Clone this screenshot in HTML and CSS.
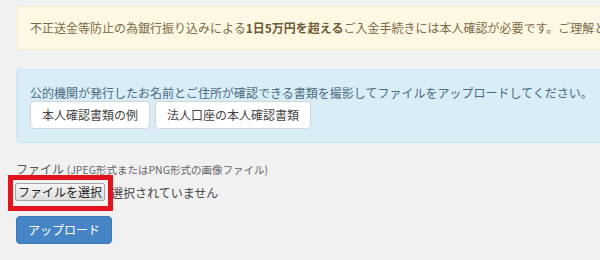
FILE: index.html
```
<!DOCTYPE html>
<html lang="ja">
<head>
<meta charset="utf-8">
<link rel="stylesheet" href="styles.css">
</head>
<body>
<div class="wrap">
  <div class="alert alert-warning">不正送金等防止の為銀行振り込みによる<b>1日5万円を超える</b>ご入金手続きには本人確認が必要です。ご理解とご協力をお願いいたします。</div>
  <div class="alert alert-info">
    <p class="info-text">公的機関が発行したお名前とご住所が確認できる書類を撮影してファイルをアップロードしてください。</p>
    <div class="btn-row">
      <button class="btn btn-default">本人確認書類の例</button>
      <button class="btn btn-default">法人口座の本人確認書類</button>
    </div>
  </div>
  <div class="form">
    <div class="label">ファイル <span class="hint">(JPEG形式またはPNG形式の画像ファイル)</span></div>
    <div class="file-row">
      <div class="file-btn-wrap">
        <span class="file-btn">ファイルを選択</span>
        <span class="highlight"></span>
      </div>
      <span class="file-status">選択されていません</span>
    </div>
    <button class="btn btn-primary">アップロード</button>
  </div>
</div>
</body>
</html>
```
FILE: styles.css
```
html, body {
  margin: 0;
  padding: 0;
  background: #f1f1f1;
  overflow: hidden;
}
body {
  font-family: "Noto Sans CJK JP", "Noto Sans", sans-serif;
  font-size: 12px;
  color: #555;
}
.wrap {
  width: 760px;
  padding: 6px 0 0 16px;
}
.alert {
  border: 1px solid transparent;
  border-radius: 4px;
  white-space: nowrap;
}
.alert-warning {
  background: #fcf8e3;
  border-color: #f7ecd0;
  color: #7d6a47;
  padding: 12px 13px;
  line-height: 18px;
  margin-bottom: 19px;
}
.alert-warning b {
  font-weight: 700;
  color: #6f5a36;
}
.alert-info {
  background: #d9edf7;
  border-color: #c6e6f2;
  color: #4a6a80;
  padding: 14px 13px 13px;
}
.info-text {
  margin: 0;
  line-height: 17px;
}
.btn-row {
  display: flex;
  gap: 5px;
}
.btn {
  font-family: inherit;
  font-size: 12px;
  border-radius: 4px;
  border: 1px solid #ccc;
  height: 28px;
  padding: 0 11px;
  line-height: 26px;
  cursor: pointer;
}
.btn-default {
  background: #fff;
  color: #444;
  border-color: #d5d5d5;
}
.form {
  padding-top: 17px;
}
.label {
  line-height: 17px;
  color: #555;
}
.hint {
  font-size: 10.5px;
  color: #666;
}
.file-row {
  display: flex;
  align-items: center;
  margin-top: 5px;
  height: 18px;
}
.file-btn-wrap {
  position: relative;
  margin-left: -1px;
}
.file-btn {
  display: block;
  box-sizing: border-box;
  width: 90px;
  height: 18px;
  line-height: 16px;
  text-align: center;
  border: 1px solid #a6a6a6;
  border-radius: 2px;
  background: linear-gradient(#f6f6f6, #dedede);
  color: #222;
  font-size: 12px;
}
.highlight {
  position: absolute;
  left: -7px;
  top: -8px;
  width: 105px;
  height: 36px;
  box-sizing: border-box;
  border: 5px solid #e3131d;
}
.file-status {
  margin-left: 6px;
  color: #444;
}
.btn-primary {
  margin-top: 15px;
  background: #4585c6;
  border-color: #3b78b6;
  color: #fff;
  height: 28px;
  padding: 0 11px;
}
```
